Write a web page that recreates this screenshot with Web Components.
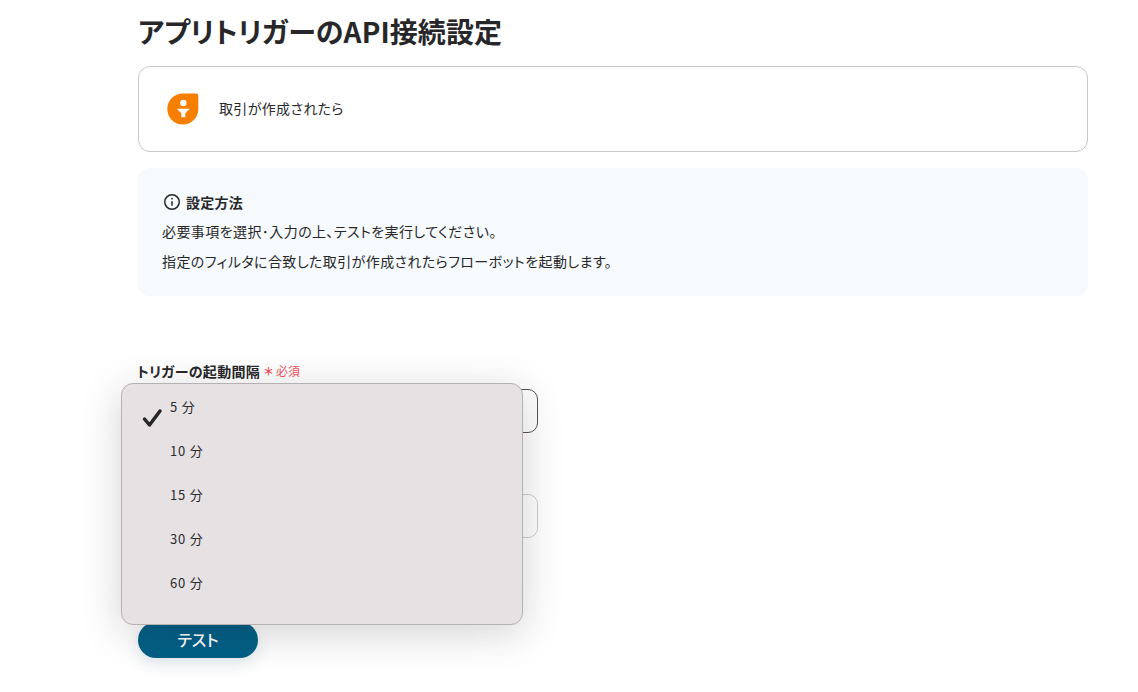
<!DOCTYPE html>
<html lang="ja">
<head>
<meta charset="utf-8">
<title>アプリトリガーのAPI接続設定</title>
<style>
  html, body { margin: 0; padding: 0; background: #fff; }
  body { font-family: "Noto Sans CJK JP", "Noto Sans", sans-serif; font-feature-settings: "palt"; color: #27272a; height: 692px; overflow: hidden; }
</style>
</head>
<body>
<trigger-page></trigger-page>
<script>
class AppCard extends HTMLElement {
  constructor() {
    super();
    this.attachShadow({ mode: 'open' });
    this.shadowRoot.innerHTML = `
      <style>
        :host { display: flex; align-items: center; gap: 20px; height: 84px; padding-left: 28px; border: 1px solid #c9c6cb; border-radius: 12px; box-sizing: content-box; }
        svg { width: 32px; height: 32px; display: block; margin-top: -1px; }
        span { font-size: 14px; line-height: 20px; margin-top: -2px; letter-spacing: .35px; color: #2a2a2d; }
      </style>
      <svg viewBox="0 0 32 32">
        <path fill="#f77f00" d="M15.800 .5H29Q31.300 .5 31.300 2.800V16A15.500 15.500 0 0 1 .3 16 15.500 15.500 0 0 1 15.800 .5Z"/>
        <circle cx="16.300" cy="10" r="3.200" fill="#fff"/>
        <path fill="#fff" d="M9.800 15.800H22.800L18.300 20.200V24.300H14.300V20.200Z"/>
      </svg>
      <span><slot></slot></span>`;
  }
}

class InfoBox extends HTMLElement {
  constructor() {
    super();
    this.attachShadow({ mode: 'open' });
    this.shadowRoot.innerHTML = `
      <style>
        :host { display: block; height: 128px; box-sizing: border-box; padding: 24px 24px 0; background: #f6fafd; border-radius: 12px; font-size: 14px; color: #27272a; letter-spacing: .42px; }
        .head { display: flex; align-items: center; gap: 5px; height: 20px; font-weight: 700; font-size: 14px; padding-left: 1px; letter-spacing: .25px; }
        .head span { line-height: 20px; margin-top: -1px; }
        svg { width: 18px; height: 18px; display: block; }
        .body { margin-top: 4px; }
        ::slotted(p) { margin: 0; line-height: 30px; }
      </style>
      <div class="head">
        <svg viewBox="0 0 18 18" fill="none" stroke="#27272a" stroke-width="1.500">
          <circle cx="9" cy="9" r="7.250"/>
          <path d="M9 8.300V12.800"/>
          <circle cx="9" cy="5.700" r=".6" fill="#27272a" stroke-width=".6"/>
        </svg>
        <span>設定方法</span>
      </div>
      <div class="body"><slot></slot></div>`;
  }
}

class FormField extends HTMLElement {
  constructor() {
    super();
    this.attachShadow({ mode: 'open' });
    const required = this.hasAttribute('required');
    this.shadowRoot.innerHTML = `
      <style>
        :host { display: block; }
        label { display: flex; align-items: center; height: 18px; margin-left: -1px; font-size: 14px; line-height: 18px; font-weight: 700; letter-spacing: .3px; margin-bottom: 9px; color: #27272a; white-space: nowrap; }
        .req { color: #f4535f; font-size: 12px; font-weight: 400; margin-left: 4px; display: flex; align-items: center; gap: 3px; letter-spacing: 0; }
        .star { font-size: 11px; font-weight: 700; line-height: 18px; }
        .box { width: 400px; height: 44px; box-sizing: border-box; border-radius: 10px; border: 1px solid var(--line, #c9c6cb); }
      </style>
      <label>${this.getAttribute('label') || ''}${required ? '<span class="req"><span class="star">＊</span>必須</span>' : ''}</label>
      <div class="box"></div>`;
  }
}

class PickerMenu extends HTMLElement {
  constructor() {
    super();
    this.attachShadow({ mode: 'open' });
    this.shadowRoot.innerHTML = `
      <style>
        :host { position: absolute; left: 121px; top: 383px; width: 402px; height: 242px; box-sizing: border-box; padding-top: 2px; background: #e6e2e4; border: 1px solid #b5b1b4; border-radius: 12px; box-shadow: 0 8px 40px rgba(40,35,40,.2); display: block; }
      </style>
      <slot></slot>`;
  }
}

class PickerItem extends HTMLElement {
  constructor() {
    super();
    this.attachShadow({ mode: 'open' });
    this.shadowRoot.innerHTML = `
      <style>
        :host { display: block; position: relative; height: 44px; padding-left: 48px; font-size: 13px; line-height: 42px; letter-spacing: .8px; color: #2a2a2d; }
        svg { position: absolute; left: 19px; top: 21px; width: 22px; height: 22px; }
      </style>
      ${this.hasAttribute('checked') ? '<svg viewBox="0 0 22 22" fill="none" stroke="#27272a" stroke-width="3.500" stroke-linecap="round" stroke-linejoin="round"><path d="M3.500 12L8.500 18 19 4"/></svg>' : ''}
      <slot></slot>`;
  }
}

class TestButton extends HTMLElement {
  constructor() {
    super();
    this.attachShadow({ mode: 'open' });
    this.shadowRoot.innerHTML = `
      <style>
        :host { display: inline-flex; align-items: center; justify-content: center; width: 120px; height: 36px; border-radius: 18px; background: #005f85; color: #fff; font-size: 16px; font-weight: 500; box-shadow: 0 6px 16px rgba(0,60,90,.12); }
        span { margin-top: -2px; }
      </style>
      <span><slot></slot></span>`;
  }
}

class TriggerPage extends HTMLElement {
  constructor() {
    super();
    this.attachShadow({ mode: 'open' });
    this.shadowRoot.innerHTML = `
      <style>
        :host { display: block; position: relative; height: 692px; }
        main { display: flex; flex-direction: column; width: 950px; margin-left: 138px; }
        h1 { margin: 0; height: 66px; box-sizing: border-box; padding-top: 8px; font-size: 28px; line-height: 46px; font-weight: 700; letter-spacing: .1px; color: #27272a; white-space: nowrap; }
        info-box { margin-top: 16px; }
        p { margin: 0; line-height: 30px; }
        .first { margin-top: 66px; --line: #5a5058; }
        .second { margin-top: 34px; --line: #cfccd0; }
        test-button { margin-top: 84px; align-self: flex-start; }
      </style>
      <main>
        <h1>アプリトリガーのAPI接続設定</h1>
        <app-card>取引が作成されたら</app-card>
        <info-box>
          <p>必要事項を選択･入力の上、テストを実行してください。</p>
          <p>指定のフィルタに合致した取引が作成されたらフローボットを起動します。</p>
        </info-box>
        <form-field class="first" label="トリガーの起動間隔" required></form-field>
        <form-field class="second" label=""></form-field>
        <test-button>テスト</test-button>
      </main>
      <picker-menu>
        <picker-item checked>5 分</picker-item>
        <picker-item>10 分</picker-item>
        <picker-item>15 分</picker-item>
        <picker-item>30 分</picker-item>
        <picker-item>60 分</picker-item>
      </picker-menu>`;
  }
}

customElements.define('app-card', AppCard);
customElements.define('info-box', InfoBox);
customElements.define('form-field', FormField);
customElements.define('picker-menu', PickerMenu);
customElements.define('picker-item', PickerItem);
customElements.define('test-button', TestButton);
customElements.define('trigger-page', TriggerPage);
</script>
</body>
</html>
